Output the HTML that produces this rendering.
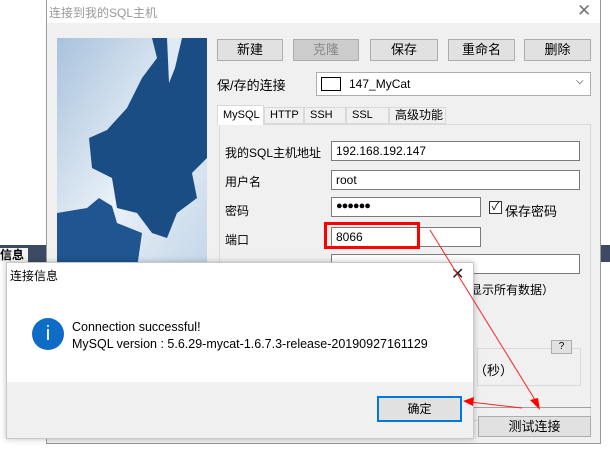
<!DOCTYPE html>
<html><head><meta charset="utf-8"><style>
*{margin:0;padding:0;box-sizing:border-box}
body{width:610px;height:452px;overflow:hidden;background:#fff;font-family:"Liberation Sans","Noto Sans CJK SC",sans-serif;font-size:12px;color:#000;position:relative}
.a{position:absolute}
.btn{position:absolute;background:#e1e1e1;border:1px solid #adadad;text-align:center;font-size:13px}
.inp{position:absolute;background:#fff;border:1px solid #7a7a7a;padding-left:4px;font-size:12px}
.lbl{position:absolute;font-size:12px}
.tab{position:absolute;top:107px;height:17px;border:1px solid #d9d9d9;font-size:11px;line-height:15px;padding-left:5px;background:#f0f0f0}
</style></head><body>
<div class="a" style="left:0;top:245px;width:46px;height:17px;background:#3c4a63"></div>
<div class="a" style="left:0;top:248px;width:28px;height:14px;background:#f3f3f3;font-size:12px;font-weight:bold;line-height:14px">信息</div>
<div class="a" style="left:600px;top:245px;width:10px;height:17px;background:#3c4a63"></div>
<div class="a" style="left:46px;top:0;width:555px;height:444px;background:#f0f0f0;border:1px solid #999"></div>
<div class="a" style="left:47px;top:0;width:553px;height:23px;background:#fff"></div>
<div class="lbl" style="left:49px;top:4px;color:#999;font-size:12px">连接到我的SQL主机</div>
<div class="a" style="left:577px;top:1px;font-size:17px;color:#777">✕</div>
<svg class="a" style="left:57px;top:38px" width="150" height="230" viewBox="0 0 150 230">
<defs><linearGradient id="g" x1="0" y1="0" x2="1" y2="1"><stop offset="0" stop-color="#a8c2dc"/><stop offset=".55" stop-color="#eaf1f8"/><stop offset="1" stop-color="#c3d6e8"/></linearGradient></defs>
<rect width="150" height="230" fill="url(#g)"/>
<path d="M95 0 L150 0 L150 120 L135 135 L140 160 L120 175 L110 200 L95 195 L80 175 L60 170 L55 140 L35 130 L32 100 L50 92 L70 70 L85 40 L100 20 Z" fill="#1b4d85"/>
<path d="M110 0 L125 0 L118 30 L112 45 Z" fill="#e0eaf4"/>
<path d="M0 175 L30 170 L42 160 L55 168 L60 185 L85 195 L80 230 L0 230 Z" fill="#1f5590"/>
</svg>
<div class="btn" style="left:217px;top:39px;width:66px;height:22px;line-height:20px">新建</div>
<div class="btn" style="left:293px;top:39px;width:66px;height:22px;line-height:20px;background:#ccc;color:#888">克隆</div>
<div class="btn" style="left:370px;top:39px;width:68px;height:22px;line-height:20px">保存</div>
<div class="btn" style="left:448px;top:39px;width:67px;height:22px;line-height:20px">重命名</div>
<div class="btn" style="left:524px;top:39px;width:67px;height:22px;line-height:20px">删除</div>
<div class="lbl" style="left:217px;top:75px;font-size:13px">保/存的连接</div>
<div class="inp" style="left:316px;top:72px;width:275px;height:24px;border-color:#adadad"></div>
<div class="a" style="left:321px;top:77px;width:20px;height:14px;border:1px solid #000;background:#fff"></div>
<div class="lbl" style="left:349px;top:77px">147_MyCat</div>
<div class="a" style="left:576px;top:76px;font-size:10px">⌵</div>
<div class="a" style="left:219px;top:124px;width:372px;height:297px;background:#f0f0f0;border:1px solid #d9d9d9"></div>
<div class="tab" style="left:264px;width:40px">HTTP</div>
<div class="tab" style="left:304px;width:42px">SSH</div>
<div class="tab" style="left:346px;width:43px">SSL</div>
<div class="tab" style="left:389px;width:57px;font-size:12px">高级功能</div>
<div class="a" style="left:217px;top:105px;width:47px;height:20px;background:#fff;border:1px solid #d9d9d9;border-bottom:none;padding:3px 0 0 5px;font-size:11px">MySQL</div>
<div class="lbl" style="left:225px;top:144px">我的SQL主机地址</div>
<div class="inp" style="left:331px;top:141px;width:249px;height:20px;line-height:18px">192.168.192.147</div>
<div class="lbl" style="left:225px;top:173px">用户名</div>
<div class="inp" style="left:331px;top:170px;width:249px;height:20px;line-height:18px">root</div>
<div class="lbl" style="left:225px;top:202px">密码</div>
<div class="inp" style="left:331px;top:197px;width:150px;height:20px;line-height:17px;font-size:11px;letter-spacing:-1px">●●●●●●</div>
<div class="a" style="left:489px;top:201px;width:13px;height:13px;border:1px solid #333;background:#fff;font-size:11px;line-height:11px;text-align:center">✓</div>
<div class="lbl" style="left:505px;top:201px;font-size:13px">保存密码</div>
<div class="lbl" style="left:225px;top:231px">端口</div>
<div class="inp" style="left:331px;top:227px;width:150px;height:20px;line-height:18px">8066</div>
<div class="a" style="left:324px;top:222px;width:96px;height:27px;border:3px solid #f00"></div>
<div class="inp" style="left:331px;top:254px;width:249px;height:20px"></div>
<div class="lbl" style="left:470px;top:281px;font-size:12px">显示所有数据）</div>
<div class="a" style="left:477px;top:348px;width:104px;height:38px;border:1px solid #d9d9d9"></div>
<div class="btn" style="left:551px;top:340px;width:21px;height:14px;font-size:10px;line-height:12px">?</div>
<div class="lbl" style="left:474px;top:360px;font-size:13px">（秒）</div>
<div class="a" style="left:470px;top:407px;width:121px;height:1px;background:#a0a0a0"></div>
<div class="btn" style="left:478px;top:416px;width:113px;height:21px;line-height:19px">测试连接</div>
<div class="a" style="left:6px;top:262px;width:468px;height:177px;background:#fff;border:1px solid #c8c8c8;box-shadow:0 0 6px rgba(0,0,0,.25)"></div>
<div class="lbl" style="left:10px;top:267px;font-size:12px">连接信息</div>
<div class="a" style="left:451px;top:264px;font-size:16px;color:#222">✕</div>
<div class="a" style="left:7px;top:382px;width:466px;height:56px;background:#f0f0f0"></div>
<div class="a" style="left:32px;top:318px;width:32px;height:32px;border-radius:50%;background:#0f6cc6;color:#fff;text-align:center;font:20px/32px 'Liberation Sans'">i</div>
<div class="lbl" style="left:72px;top:320px;font-size:12.5px">Connection successful!</div>
<div class="lbl" style="left:72px;top:337px;font-size:12.5px">MySQL version : 5.6.29-mycat-1.6.7.3-release-20190927161129</div>
<div class="btn" style="left:377px;top:396px;width:85px;height:26px;border:2px solid #0078d7;line-height:22px;font-size:12px">确定</div>
<svg class="a" style="left:0;top:0" width="610" height="452">
<line x1="430" y1="230" x2="537" y2="403" stroke="#f22" stroke-width="1"/>
<polygon points="540,410 530,400 538,398" fill="#f00"/>
<line x1="522" y1="408" x2="470" y2="402" stroke="#f22" stroke-width="1"/>
<polygon points="463,401 474,397 473,406" fill="#f00"/>
</svg>
</body></html>
